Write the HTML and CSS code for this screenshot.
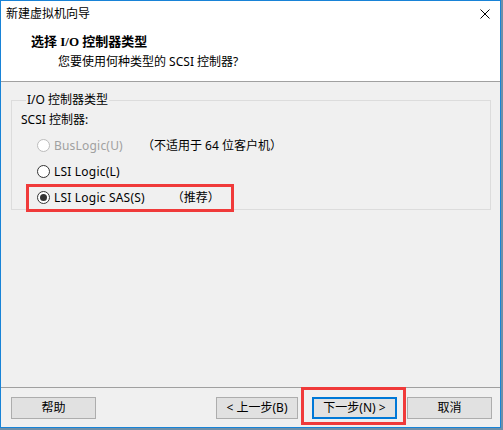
FILE: index.html
```html
<!DOCTYPE html>
<html lang="zh-CN">
<head>
<meta charset="utf-8">
<title>新建虚拟机向导</title>
<link rel="stylesheet" href="styles.css">
</head>
<body>
<div class="window">
  <div class="titlebar">
    <span class="title">新建虚拟机向导</span>
    <svg class="close" width="10" height="10" viewBox="0 0 10 10"><path d="M0.5 0.5L9.5 9.5M9.5 0.5L0.5 9.5" stroke="#000" stroke-width="1" fill="none"/></svg>
  </div>
  <div class="header">
    <div class="heading">选择 I/O 控制器类型</div>
    <div class="subtitle">您要使用何种类型的 SCSI 控制器?</div>
  </div>
  <div class="main">
    <fieldset class="group">
      <legend class="legend">I/O 控制器类型</legend>
      <div class="label">SCSI 控制器:</div>
      <div class="row disabled"><span class="radio"></span><span class="text">BusLogic(U)</span><span class="note note1">（不适用于 64 位客户机）</span></div>
      <div class="row"><span class="radio"></span><span class="text">LSI Logic(L)</span></div>
      <div class="row"><span class="radio checked"></span><span class="text">LSI Logic SAS(S)</span><span class="note note3">（推荐）</span></div>
    </fieldset>
  </div>
  <div class="footer">
    <button class="btn">帮助</button>
    <span class="spacer"></span>
    <button class="btn back">&lt; 上一步(B)</button>
    <button class="btn next">下一步(N) &gt;</button>
    <button class="btn cancel">取消</button>
  </div>
  <div class="mark mark1"></div>
  <div class="mark mark2"></div>
</div>
</body>
</html>
```

FILE: styles.css
```css
* { box-sizing: border-box; }
html, body { margin: 0; padding: 0; }
body {
  width: 503px;
  height: 430px;
  background: #6f8fa8;
  font-family: "Noto Sans", "Noto Sans CJK SC", sans-serif;
  font-size: 12px;
  color: #000;
  overflow: hidden;
}
.window {
  position: relative;
  width: 501px;
  height: 428px;
  border: 1px solid #1883d7;
  background: #f0f0f0;
  display: flex;
  flex-direction: column;
}
.titlebar {
  height: 30px;
  background: #fff;
  display: flex;
  align-items: flex-start;
  padding: 4px 0 0 5px;
  line-height: 17px;
}
.title { flex: 1; }
.close { margin: 4px 10px 0 0; }
.header {
  height: 51px;
  background: #fff;
  border-bottom: 1px solid #a0a0a0;
  padding: 2px 0 0 30px;
  line-height: 17px;
}
.heading {
  font-family: "Liberation Serif", "Noto Sans CJK SC", serif;
  font-weight: bold;
  font-size: 13px;
  line-height: 18px;
}
.subtitle {
  padding: 2px 0 0 27px;
}
.main {
  flex: 1;
  padding: 10px 9px 0 10px;
}
.group {
  margin: 0;
  border: 1px solid #dcdcdc;
  padding: 4px 0 0 9px;
  height: 118px;
}
.legend {
  padding: 0 1px;
  margin-left: 5px;
  line-height: 16px;
}
.label { line-height: 16px; height: 20px; }
.row {
  display: flex;
  align-items: center;
  height: 26px;
  padding-left: 16px;
}
.text { letter-spacing: 0.2px; }
.radio {
  width: 13px;
  height: 13px;
  border: 1px solid #333;
  border-radius: 50%;
  background: #fff;
  position: relative;
  margin-right: 4px;
  flex: none;
}
.radio.checked::after {
  content: "";
  position: absolute;
  left: 2px;
  top: 2px;
  width: 7px;
  height: 7px;
  border-radius: 50%;
  background: #333;
}
.disabled .radio { border-color: #bcbcbc; }
.disabled .text { color: #a0a0a0; }
.note1 { margin-left: 19px; }
.note3 { margin-left: 27px; }
.footer {
  height: 40px;
  border-top: 1px solid #a0a0a0;
  display: flex;
  align-items: flex-start;
  padding: 9px 8px 0 10px;
}
.spacer { flex: 1; }
.btn {
  font: inherit;
  height: 22px;
  width: 85px;
  background: #e1e1e1;
  border: 1px solid #adadad;
  padding: 0;
  color: #000;
  line-height: 18px;
}
.back { width: 82px; }
.next { margin-left: 14px; border: 2px solid #0078d7; }
.cancel { margin-left: 10px; }
.mark {
  position: absolute;
  border: 3px solid #f03a3a;
}
.mark1 { left: 25px; top: 183px; width: 208px; height: 28px; }
.mark2 { left: 300px; top: 386px; width: 105px; height: 38px; }
```
